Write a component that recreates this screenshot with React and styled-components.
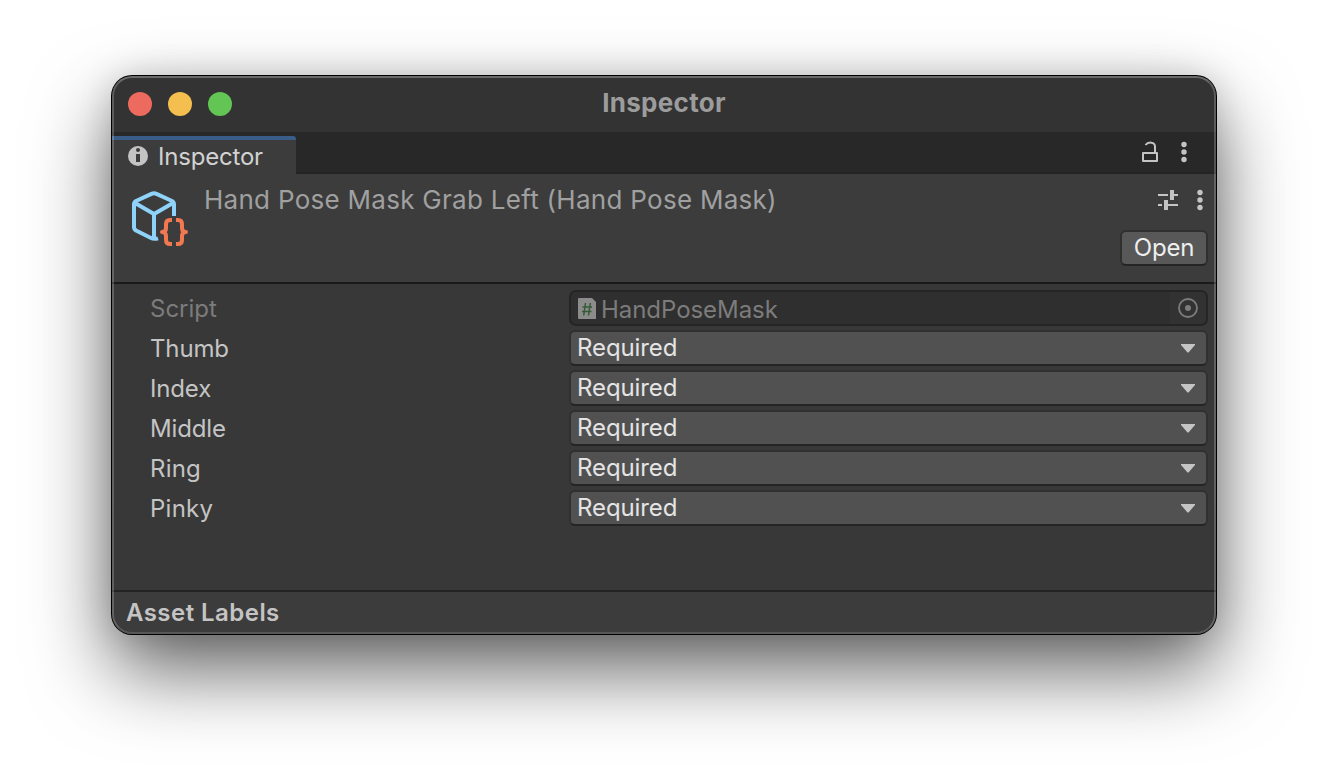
import React from "react";
import styled, { createGlobalStyle } from "styled-components";

const GlobalStyle = createGlobalStyle`
  * { box-sizing: border-box; }
  html, body { margin: 0; background: #fff; }
  body { font-family: Inter, "Liberation Sans", sans-serif; font-size: 24px; overflow: hidden; }
  svg { display: block; }
`;

const Desktop = styled.main`
  width: 1328px;
  height: 782px;
  padding: 76px 112px 0;
  overflow: hidden;
`;

const Window = styled.section`
  position: relative;
  display: flex;
  flex-direction: column;
  width: 1104px;
  height: 558px;
  border-radius: 20px;
  overflow: hidden;
  background: #383838;
  box-shadow: 0 0 0 1px #000, 0 36px 80px rgba(0, 0, 0, 0.62), 0 0 34px rgba(0, 0, 0, 0.15);

  /* glass rim drawn over the window content */
  &::after {
    content: "";
    position: absolute;
    inset: 0;
    border-radius: inherit;
    border: 2px solid rgba(255, 255, 255, 0.2);
    border-top-color: rgba(255, 255, 255, 0.27);
    border-bottom-color: rgba(255, 255, 255, 0.14);
    pointer-events: none;
  }
`;

const TitleBar = styled.header`
  display: grid;
  grid-template-columns: 160px 1fr 160px;
  height: 56px;
  padding: 0 16px;
  background: #333;
`;

const Lights = styled.div`
  display: flex;
  gap: 16px;
  padding-top: 16px;
`;

const Light = styled.span`
  width: 24px;
  height: 24px;
  border-radius: 50%;
  background: ${(p) => p.$color};
`;

const Text = styled.span`
  color: ${(p) => p.$color || "#c4c4c4"};
  font-size: ${(p) => p.$size || 24}px;
  font-weight: ${(p) => p.$weight || 400};
  letter-spacing: ${(p) => p.$track || 0}px;
  line-height: 32px;
  white-space: pre;
`;

const WindowTitle = styled.div`
  display: flex;
  justify-content: center;
  padding-top: 11px;
`;

const TabStrip = styled.nav`
  display: flex;
  justify-content: space-between;
  height: 42px;
  padding-top: 4px;
  background: #282828;
  box-shadow: inset 0 -2px #232323;
`;

const Tab = styled.div`
  display: flex;
  align-items: flex-start;
  gap: 10px;
  width: 184px;
  height: 38px;
  padding: 0 0 0 16px;
  border-top: 4px solid #3a5c88;
  border-radius: 0 3px 0 0;
  background: #3c3c3c;
  & > svg { margin-top: 6px; }
  & > span { padding-top: 1px; }
`;

const StripTools = styled.div`
  display: flex;
  gap: 23px;
  padding: 4px 29px 0 0;
`;

const AssetHeader = styled.section`
  display: flex;
  height: 110px;
  padding-left: 16px;
  background: #3c3c3c;
  border-bottom: 2px solid #1a1a1a;
`;

const AssetIcon = styled.div`
  width: 76px;
  padding-top: 12px;
`;

const AssetName = styled.div`
  flex: 1;
  padding-top: 10px;
`;

const AssetTools = styled.div`
  display: flex;
  flex-direction: column;
  align-items: flex-end;
  gap: 18px;
  padding: 14px 8px 0 0;
`;

const IconRow = styled.div`
  display: flex;
  align-items: center;
  gap: 19px;
  padding-right: 5px;
`;

const Button = styled.button`
  display: flex;
  justify-content: center;
  width: 88px;
  height: 36px;
  padding: 0;
  font: inherit;
  background: #585858;
  border: 2px solid #303030;
  border-bottom-color: #242424;
  border-radius: 6px;
`;

const Fields = styled.section`
  display: flex;
  flex-direction: column;
  gap: 4px;
  height: 306px;
  padding: 6px 8px 0 38px;
`;

const Row = styled.div`
  display: grid;
  grid-template-columns: 419px 1fr;
  height: 36px;
  & > span { padding-top: 3px; }
`;

const ObjectField = styled.div`
  display: flex;
  height: 36px;
  border: 2px solid #252525;
  border-radius: 7px;
  background: #2f2f2f;
  padding-left: 7px;
  & > svg { margin: 6px 5px 0 0; }
  & > span { flex: 1; padding-top: 2px; }
`;

const Picker = styled.div`
  display: flex;
  justify-content: center;
  width: 36px;
  padding-top: 6px;
  border-radius: 0 5px 5px 0;
  background: #323232;
`;

const Dropdown = styled.div`
  display: flex;
  justify-content: space-between;
  border: 2px solid #303030;
  border-bottom-color: #242424;
  border-radius: 6px;
  background: #515151;
  padding: 0 11px 0 6px;
  & > svg { margin-top: 12px; }
`;

const Footer = styled.footer`
  height: 44px;
  padding: 5px 0 0 14px;
  border-top: 2px solid #232323;
  background: #3c3c3c;
`;

const InfoIcon = () => (
  <svg width="20" height="20" viewBox="0 0 20 20">
    <circle cx="10" cy="10" r="10" fill="#c4c4c4" />
    <circle cx="10" cy="4" r="2" fill="#3c3c3c" />
    <path d="M8 8H12V16H8Z" fill="#3c3c3c" />
  </svg>
);

const LockIcon = () => (
  <svg width="16" height="24" viewBox="0 0 16 24" fill="none" stroke="#c4c4c4" strokeWidth="2">
    <path d="M1 13h14v8H1zM13 13V6.5C13 1.6 6 1.6 3.5 5" strokeLinejoin="round" />
  </svg>
);

const MoreIcon = () => (
  <svg width="6" height="24" viewBox="0 0 6 24" fill="#c4c4c4">
    <circle cx="3" cy="4.5" r="2.7" />
    <circle cx="3" cy="12" r="2.7" />
    <circle cx="3" cy="19.5" r="2.7" />
  </svg>
);

const PresetIcon = () => (
  <svg width="20" height="20" viewBox="0 0 20 20" fill="#c4c4c4">
    <path d="M0 4h10v2H0zM12 0h4v10h-4zM16 4h4v2h-4zM0 14h4v2H0zM6 10h4v10H6zM10 14h10v2H10z" />
  </svg>
);

const PrefabIcon = () => (
  <svg width="64" height="64" viewBox="0 0 64 64" fill="none" strokeLinejoin="round">
    <path
      d="M30 52.3Q26 53.6 22.5 51.7L8 44.5Q6 43.3 6 41V18.5Q6 16.2 8 15L23.5 7.9Q26 6.8 28.5 7.9L44 15Q46 16.2 46 18.5V30M7 17L26 28L45 17M26 28V52.5"
      stroke="#8fd3fb"
      strokeWidth="4"
    />
    <path
      d="M44 34H42Q38 34 38 38V42Q38 46 34 46Q38 46 38 50V54Q38 58 42 58H44M48 34H50Q54 34 54 38V42Q54 46 58 46Q54 46 54 50V54Q54 58 50 58H48"
      stroke="#f27850"
      strokeWidth="4"
    />
  </svg>
);

const ScriptIcon = () => (
  <svg width="18" height="22" viewBox="0 0 18 22">
    <path d="M1 0H14L18 4V20.5Q18 21 17 21H1Q0 21 0 20V1Q0 0 1 0Z" fill="#8c8c8c" />
    <path d="M7.5 5L5.7 17.5M12.3 5L10.5 17.5M4.5 9H14M4 13.5H13.5" stroke="#365b36" strokeWidth="1.5" fill="none" />
  </svg>
);

const TargetIcon = () => (
  <svg width="20" height="20" viewBox="0 0 20 20">
    <circle cx="10" cy="10" r="9" fill="none" stroke="#7c7c7c" strokeWidth="1.8" />
    <circle cx="10" cy="10" r="3" fill="#7c7c7c" />
  </svg>
);

const Caret = () => (
  <svg width="14" height="9" viewBox="0 0 14 9">
    <path d="M0 0H14V1L7.5 8.5H6.5L0 1Z" fill="#c4c4c4" />
  </svg>
);

const fingers = [
  { name: "Thumb", track: -0.15 },
  { name: "Index", track: -0.15 },
  { name: "Middle", track: -0.15 },
  { name: "Ring", track: 0.2 },
  { name: "Pinky", track: 0.25 },
];

export default function App() {
  return (
    <Desktop>
      <GlobalStyle />
      <Window>
        <TitleBar>
          <Lights>
            <Light $color="#ed6a5e" />
            <Light $color="#f5bf4f" />
            <Light $color="#62c554" />
          </Lights>
          <WindowTitle>
            <Text $size={26} $weight={700} $track={0.3} $color="#9c9c9c">Inspector</Text>
          </WindowTitle>
        </TitleBar>
        <TabStrip>
          <Tab>
            <InfoIcon />
            <Text $color="#d2d2d2" $track={-0.2}>Inspector</Text>
          </Tab>
          <StripTools>
            <LockIcon />
            <MoreIcon />
          </StripTools>
        </TabStrip>
        <AssetHeader>
          <AssetIcon><PrefabIcon /></AssetIcon>
          <AssetName>
            <Text $size={26} $color="#a0a0a0" $track={0.28}>Hand Pose Mask Grab Left (Hand Pose Mask)</Text>
          </AssetName>
          <AssetTools>
            <IconRow>
              <PresetIcon />
              <MoreIcon />
            </IconRow>
            <Button><Text $color="#eee" $track={-0.2}>Open</Text></Button>
          </AssetTools>
        </AssetHeader>
        <Fields>
          <Row>
            <Text $color="#7c7c7c">Script</Text>
            <ObjectField>
              <ScriptIcon />
              <Text $color="#7c7c7c" $track={-0.05}>HandPoseMask</Text>
              <Picker><TargetIcon /></Picker>
            </ObjectField>
          </Row>
          {fingers.map(({ name, track }) => (
            <Row key={name}>
              <Text $track={track}>{name}</Text>
              <Dropdown>
                <Text $color="#e4e4e4" $track={-0.1}>Required</Text>
                <Caret />
              </Dropdown>
            </Row>
          ))}
        </Fields>
        <Footer>
          <Text $weight={600} $track={0.45}>Asset Labels</Text>
        </Footer>
      </Window>
    </Desktop>
  );
}
